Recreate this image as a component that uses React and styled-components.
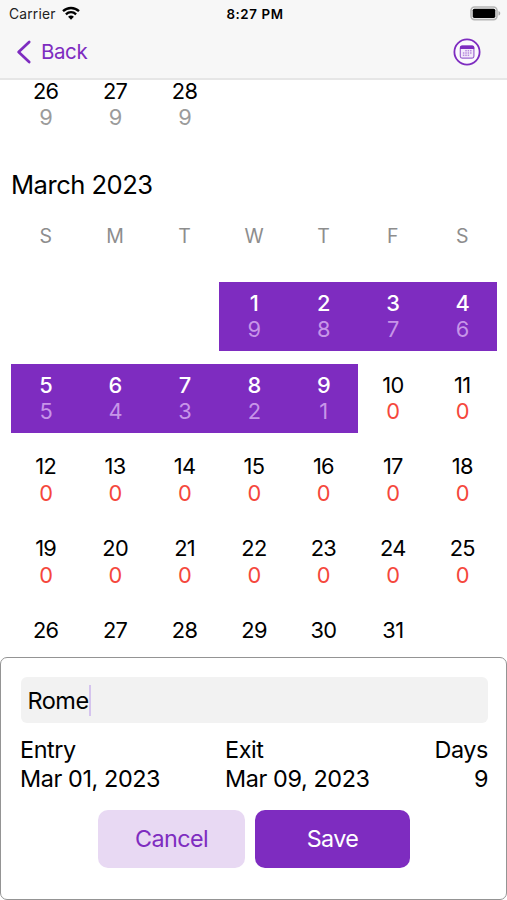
import React from 'react';
import styled, { createGlobalStyle } from 'styled-components';

const PURPLE = '#7e2cc0';

const GlobalStyle = createGlobalStyle`
  *, *::before, *::after { box-sizing: border-box; }
  body {
    margin: 0;
    background: #fff;
    color: #000;
    font-family: Inter, "Liberation Sans", sans-serif;
  }
`;

const Screen = styled.main`
  display: flex;
  flex-direction: column;
  width: 507px;
  height: 900px;
  overflow: hidden;
`;

const Header = styled.header`
  flex: none;
  height: 80px;
  background: #f7f7f7;
  border-bottom: 2px solid #e6e6e6;
`;

const StatusBar = styled.div`
  display: grid;
  grid-template-columns: 1fr auto 1fr;
  align-items: center;
  height: 27px;
  padding: 0 6px 0 9px;
  font-size: 13.8px;
`;

const Carrier = styled.div`
  display: flex;
  align-items: center;
  gap: 6px;
  color: #222;
  letter-spacing: 0.2px;
`;

const Time = styled.div`
  font-weight: 600;
  font-size: 13.3px;
  letter-spacing: 0.62px;
`;

const BatterySlot = styled.div`
  display: flex;
  justify-content: flex-end;
`;

const NavBar = styled.nav`
  display: flex;
  align-items: center;
  justify-content: space-between;
  height: 50px;
  padding: 0 26px 0 16px;
`;

const BackButton = styled.button`
  display: flex;
  align-items: center;
  gap: 9px;
  padding: 0;
  border: 0;
  background: none;
  color: ${PURPLE};
  font: 400 20.5px/24px Inter, sans-serif;
  letter-spacing: -0.4px;
`;

const IconButton = styled.button`
  display: flex;
  padding: 0;
  border: 0;
  background: none;
`;

const Calendar = styled.section`
  flex: none;
  height: 577px;
  padding: 0 10px 0 11px;
  overflow: hidden;
`;

const Week = styled.div`
  display: grid;
  grid-template-columns: repeat(7, 1fr);
  height: 69.3px;
  margin-bottom: 12.4px;
`;

const PreviousMonth = styled.div`
  margin-top: -10.3px;
`;

const MonthTitle = styled.h2`
  margin: 30.6px 0 0;
  font-size: 25.6px;
  font-weight: 400;
  line-height: 30px;
  letter-spacing: -0.52px;
`;

const Weekdays = styled.div`
  display: grid;
  grid-template-columns: repeat(7, 1fr);
  height: 30px;
  margin: 21px 0 31.4px;
  color: #8d8d8d;
  font-size: 19.5px;
  line-height: 30px;
  text-align: center;
`;

const DayCell = styled.div`
  padding-top: 8px;
  background: ${({ $selected }) => ($selected ? PURPLE : 'transparent')};
  color: ${({ $selected }) => ($selected ? '#fff' : '#000')};
  font-size: 21.8px;
  font-weight: ${({ $selected }) => ($selected ? 450 : 400)};
  line-height: 26.5px;
  letter-spacing: -0.65px;
  text-align: center;
`;

const toneColors = { over: '#f5473c', past: '#9b9b9b', selected: '#c795e8' };

const Remaining = styled.div`
  color: ${({ $tone }) => toneColors[$tone]};
  font-weight: 400;
`;

const Sheet = styled.section`
  flex: none;
  height: 243px;
  padding: 19px 18px 0 19px;
  border: 1.5px solid #949494;
  border-radius: 7px;
  background: #fff;
`;

const NameField = styled.div`
  display: flex;
  align-items: center;
  height: 46px;
  margin-left: 1px;
  padding: 0 6.5px;
  border-radius: 6px;
  background: #f2f2f2;
  font-size: 23.5px;
  letter-spacing: -0.5px;
`;

const Caret = styled.span`
  width: 2.5px;
  height: 31px;
  background: #d5c4ee;
`;

const Summary = styled.div`
  display: grid;
  grid-template-columns: 205px 1fr auto;
  margin-top: 12px;
  font-size: 23.4px;
  line-height: 29.3px;
  letter-spacing: -0.4px;
`;

const SummaryItem = styled.div`
  text-align: ${({ $align }) => $align || 'left'};
`;

const Actions = styled.div`
  display: flex;
  gap: 10px;
  margin: 16px 0 0 78px;
`;

const ActionButton = styled.button`
  width: ${({ $primary }) => ($primary ? 155 : 147)}px;
  height: 58px;
  padding: 0;
  border: 0;
  border-radius: 10px;
  background: ${({ $primary }) => ($primary ? PURPLE : '#e8d9f3')};
  color: ${({ $primary }) => ($primary ? '#fff' : PURPLE)};
  font: 400 23.3px Inter, sans-serif;
  letter-spacing: -0.55px;
`;

function WifiIcon() {
  return (
    <svg width="18" height="15" viewBox="0 0 18 15" fill="none" stroke="#000" strokeWidth="2.3">
      <path d="M1 5.2C5.5.9 12.5.9 17 5.2" />
      <path d="M3.9 8.3c2.9-2.8 7.3-2.8 10.2 0" />
      <path d="M6.1 10.8c1.7-1.6 4.1-1.6 5.8 0L9 13.7Z" fill="#000" stroke="none" />
    </svg>
  );
}

function BatteryIcon() {
  return (
    <svg width="31" height="15" viewBox="0 0 31 15">
      <rect x="1" y="1" width="26" height="12.6" rx="3.5" fill="#f7f7f7" stroke="#b5b5b5" strokeWidth="1.6" />
      <rect x="2.7" y="2.7" width="22.6" height="9.2" rx="1.6" />
      <path d="M28.5 5c2.3.8 2.3 3.8 0 4.6Z" fill="#a9a9a9" />
    </svg>
  );
}

function BackIcon() {
  return (
    <svg width="16" height="24" viewBox="0 0 16 24" fill="none" stroke={PURPLE} strokeWidth="2.7" strokeLinecap="round" strokeLinejoin="round">
      <path d="M13.2 2 2.6 12l10.6 10" />
    </svg>
  );
}

function CalendarIcon() {
  const dots = [[13, 12.7], [15.4, 12.7], [17.8, 12.7], [10.6, 15], [13, 15], [15.4, 15], [17.8, 15], [10.6, 17.3], [13, 17.3], [15.4, 17.3]];
  return (
    <svg width="28" height="28" viewBox="0 0 28 28" fill="none">
      <circle cx="14" cy="14" r="12.6" fill="#fbf9fd" stroke={PURPLE} strokeWidth="1.8" />
      <rect x="7.3" y="8.1" width="13.6" height="12" rx="1.8" fill="#f3eafa" stroke="#9c65cf" strokeWidth="1.2" />
      <path d="M7 11V9.5C7 8.2 7.8 7.5 9 7.5h10.2c1.2 0 2 .7 2 2V11Z" fill={PURPLE} />
      {dots.map(([x, y]) => (
        <rect key={`${x}-${y}`} x={x - 0.75} y={y - 0.75} width="1.5" height="1.5" fill="#b78bdd" />
      ))}
    </svg>
  );
}

function Day({ day, remaining, selected, past }) {
  const tone = selected ? 'selected' : past ? 'past' : 'over';
  return (
    <DayCell $selected={selected}>
      {day}
      <Remaining $tone={tone}>{remaining}</Remaining>
    </DayCell>
  );
}

const february = [26, 27, 28];
const marchWeeks = [
  [null, null, null, 1, 2, 3, 4],
  [5, 6, 7, 8, 9, 10, 11],
  [12, 13, 14, 15, 16, 17, 18],
  [19, 20, 21, 22, 23, 24, 25],
  [26, 27, 28, 29, 30, 31],
];
const weekdays = ['S', 'M', 'T', 'W', 'T', 'F', 'S'];

export default function App() {
  return (
    <Screen>
      <GlobalStyle />
      <Header>
        <StatusBar>
          <Carrier>Carrier <WifiIcon /></Carrier>
          <Time>8:27 PM</Time>
          <BatterySlot><BatteryIcon /></BatterySlot>
        </StatusBar>
        <NavBar>
          <BackButton><BackIcon />Back</BackButton>
          <IconButton aria-label="Calendar"><CalendarIcon /></IconButton>
        </NavBar>
      </Header>
      <Calendar>
        <PreviousMonth>
          <Week>{february.map((day) => <Day key={day} day={day} remaining={9} past />)}</Week>
        </PreviousMonth>
        <MonthTitle>March 2023</MonthTitle>
        <Weekdays>{weekdays.map((name, i) => <span key={i}>{name}</span>)}</Weekdays>
        {marchWeeks.map((week, w) => (
          <Week key={w}>
            {week.map((day, i) =>
              day === null ? (
                <span key={i} />
              ) : (
                <Day key={i} day={day} selected={day <= 9} remaining={w === 4 ? null : Math.max(0, 10 - day)} />
              )
            )}
          </Week>
        ))}
      </Calendar>
      <Sheet>
        <NameField>Rome<Caret /></NameField>
        <Summary>
          <SummaryItem>Entry<br />Mar 01, 2023</SummaryItem>
          <SummaryItem>Exit<br />Mar 09, 2023</SummaryItem>
          <SummaryItem $align="right">Days<br />9</SummaryItem>
        </Summary>
        <Actions>
          <ActionButton>Cancel</ActionButton>
          <ActionButton $primary>Save</ActionButton>
        </Actions>
      </Sheet>
    </Screen>
  );
}
